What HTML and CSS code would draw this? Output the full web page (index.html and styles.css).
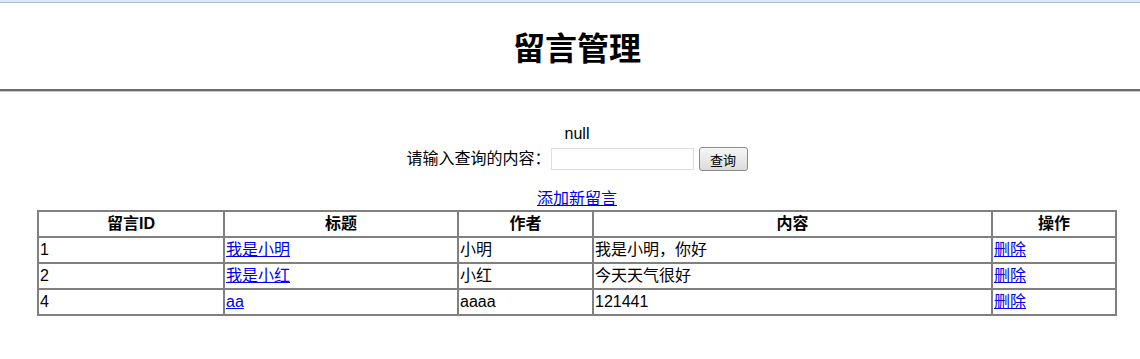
FILE: index.html
```html
<!DOCTYPE html>
<html lang="zh-CN">
<head>
  <meta charset="UTF-8">
  <title>留言管理</title>
  <link rel="stylesheet" href="styles.css">
</head>
<body>
  <div class="topbar"></div>
  <h1>留言管理</h1>
  <hr>

  <div class="main">
    <div class="msg">null</div>
    <form class="search">
      <label>请输入查询的内容：</label>
      <input type="text" name="keyword">
      <button type="button">查询</button>
    </form>
    <div class="add"><a href="#">添加新留言</a></div>

    <table class="list">
      <colgroup>
        <col style="width:186px">
        <col style="width:234px">
        <col style="width:135px">
        <col style="width:399px">
        <col style="width:124px">
      </colgroup>
      <tr>
        <th>留言ID</th>
        <th>标题</th>
        <th>作者</th>
        <th>内容</th>
        <th>操作</th>
      </tr>
      <tr>
        <td>1</td>
        <td><a href="#">我是小明</a></td>
        <td>小明</td>
        <td>我是小明，你好</td>
        <td><a href="#">删除</a></td>
      </tr>
      <tr>
        <td>2</td>
        <td><a href="#">我是小红</a></td>
        <td>小红</td>
        <td>今天天气很好</td>
        <td><a href="#">删除</a></td>
      </tr>
      <tr>
        <td>4</td>
        <td><a href="#">aa</a></td>
        <td>aaaa</td>
        <td>121441</td>
        <td><a href="#">删除</a></td>
      </tr>
    </table>
  </div>
</body>
</html>
```

FILE: styles.css
```css
html {
  overflow: hidden;
}

body {
  width: 1154px;
  margin: 0;
  font-family: "Liberation Sans", "Noto Sans CJK SC", sans-serif;
  font-size: 16px;
  color: #000;
  background: #fff;
}

a {
  color: #0000ee;
  text-decoration: underline;
}

.topbar {
  height: 2px;
  background: #dbe8f7;
  border-bottom: 1px solid #a9c0dc;
}

h1 {
  margin: 26px 0 0;
  height: 40px;
  line-height: 40px;
  font-size: 32px;
  font-weight: bold;
  text-align: center;
}

hr {
  margin: 20px 0 0;
  border: none;
  border-top: 2px solid #6b6b6b;
  border-bottom: 1px solid #c8c8c8;
}

.main {
  padding-top: 32px;
  text-align: center;
}

.msg {
  line-height: 20px;
}

.search {
  margin: 3px 0 0;
  display: flex;
  justify-content: center;
  align-items: center;
  height: 24px;
  line-height: 20px;
}

.search input {
  width: 137px;
  height: 16px;
  margin: 0 5px 0 0;
  padding: 2px;
  border: 1px solid #dcdde6;
  font-size: 14px;
}

.search button {
  width: 49px;
  height: 24px;
  padding: 0;
  border: 1px solid #8b8b8b;
  border-radius: 3px;
  background: linear-gradient(#f6f6f6, #dcdcdc);
  font-family: "Liberation Sans", "Noto Sans CJK SC", sans-serif;
  font-size: 13px;
}

.add {
  margin-top: 18px;
  line-height: 20px;
}

.list {
  width: 1080px;
  margin: 1px auto 0;
  border-collapse: collapse;
  border: 2px solid #808080;
  table-layout: fixed;
  text-align: left;
}

.list th,
.list td {
  height: 24px;
  padding: 0 1px;
  border: 2px solid #808080;
  line-height: 20px;
}

.list th {
  text-align: center;
  font-weight: bold;
}
```
